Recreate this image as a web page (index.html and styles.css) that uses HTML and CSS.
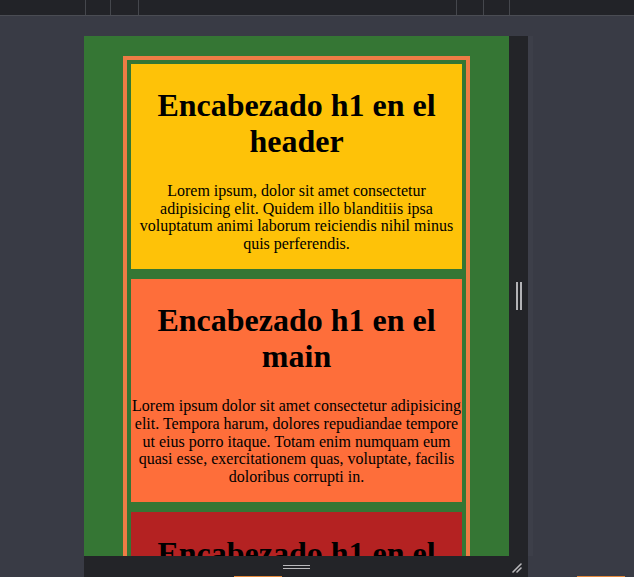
FILE: index.html
```html
<!DOCTYPE html>
<html lang="es">
<head>
<meta charset="utf-8">
<title>Layout</title>
<link rel="stylesheet" href="styles.css">
</head>
<body>
<div class="app">
  <div class="toolbar">
    <span class="tick t1"></span><span class="tick t2"></span><span class="tick t3"></span><span class="tick t4"></span><span class="tick t5"></span><span class="tick t6"></span>
  </div>
  <div class="workspace">
    <div class="device">
      <div class="device-row">
        <div class="viewport">
          <div class="page">
            <div class="container">
              <header class="block header">
                <h1>Encabezado h1 en el header</h1>
                <p>Lorem ipsum, dolor sit amet consectetur adipisicing elit. Quidem illo blanditiis ipsa voluptatum animi laborum reiciendis nihil minus quis perferendis.</p>
              </header>
              <main class="block main">
                <h1>Encabezado h1 en el main</h1>
                <p>Lorem ipsum dolor sit amet consectetur adipisicing elit. Tempora harum, dolores repudiandae tempore ut eius porro itaque. Totam enim numquam eum quasi esse, exercitationem quas, voluptate, facilis doloribus corrupti in.</p>
              </main>
              <footer class="block footer">
                <h1>Encabezado h1 en el footer</h1>
                <p>Lorem ipsum dolor sit amet consectetur adipisicing elit.</p>
              </footer>
            </div>
          </div>
        </div>
        <div class="vhandle"><span class="bar"></span><span class="bar"></span></div>
        <div class="edge"></div>
      </div>
      <div class="hhandle">
        <span class="grip"></span>
        <svg class="corner" width="12" height="12" viewBox="0 0 12 12"><path d="M2 11 L10 3 M6 11 L10 7" stroke="#b9b9bc" stroke-width="1.6" stroke-linecap="round" fill="none"/></svg>
      </div>
    </div>
  </div>
  <span class="guide g1"></span>
  <span class="guide g2"></span>
</div>
</body>
</html>
```

FILE: styles.css
```css
html, body {
  margin: 0;
  padding: 0;
}
body {
  background: #393b45;
  width: 634px;
  height: 577px;
  overflow: hidden;
}
.app {
  position: relative;
  height: 577px;
}
.toolbar {
  height: 15px;
  background: #222328;
  border-bottom: 1px solid #4a4c53;
  display: flex;
}
.tick {
  width: 1px;
  height: 15px;
  background: #45474d;
}
.t1 { margin-left: 85px; }
.t2 { margin-left: 24px; }
.t3 { margin-left: 27px; }
.t4 { margin-left: 317px; }
.t5 { margin-left: 26px; }
.t6 { margin-left: 25px; }

.workspace {
  padding: 20px 0 0 84px;
}
.device {
  display: inline-flex;
  flex-direction: column;
}
.device-row {
  display: flex;
}
.viewport {
  width: 425px;
  height: 520px;
  overflow: hidden;
  background: #357634;
}
.page {
  padding-top: 20px;
}
.container {
  width: 331px;
  margin: 0 auto;
  padding: 4px;
  border: 4px solid #ee7c45;
  display: flex;
  flex-direction: column;
  gap: 10px;
}
.block {
  display: flow-root;
  text-align: center;
  color: #000;
  font-family: "Liberation Serif", "Times New Roman", serif;
}
.block h1 {
  font-size: 32px;
  font-weight: bold;
  margin: 23px 0 23px;
  line-height: 36px;
}
.block p {
  font-size: 16px;
  line-height: 17.6px;
  margin: 0 0 17px;
}
.header { background: #fec208; }
.main { background: #fe6e3a; }
.footer { background: #b42222; }

.vhandle {
  width: 19px;
  height: 520px;
  background: #232428;
  display: flex;
  justify-content: center;
  align-items: center;
  gap: 2px;
}
.vhandle .bar {
  width: 2px;
  height: 28px;
  background: #b3b3b6;
}
.edge {
  width: 5px;
  background: #3d3f49;
}
.hhandle {
  width: 444px;
  height: 21px;
  background: #232428;
  display: flex;
  align-items: center;
  justify-content: center;
  position: relative;
}
.grip {
  width: 27px;
  height: 2px;
  border-top: 1.5px solid #b9b9bc;
  border-bottom: 1.5px solid #b9b9bc;
  margin-left: -20px;
}
.corner {
  position: absolute;
  right: 5px;
  bottom: 4px;
}
.guide {
  position: absolute;
  bottom: 0;
  height: 1px;
  background: #e58a3c;
}
.g1 { left: 234px; width: 48px; }
.g2 { left: 577px; width: 48px; }
```
